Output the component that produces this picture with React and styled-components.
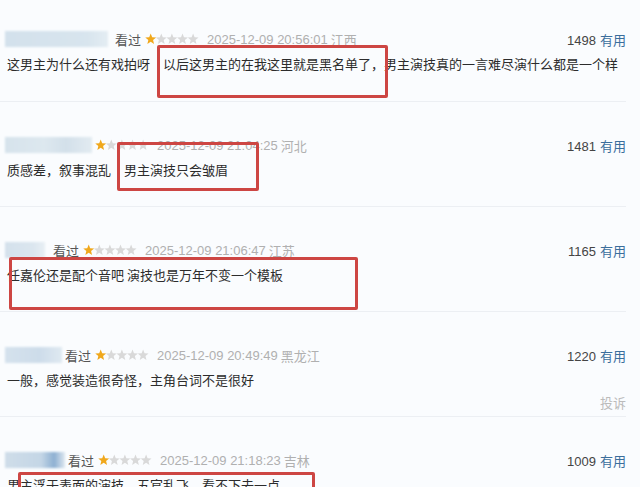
import React from 'react';
import styled, { createGlobalStyle } from 'styled-components';

/* global */

const GlobalStyle = createGlobalStyle`
  html, body {
    margin: 0;
    padding: 0;
    background: #fafcfe;
  }
  body {
    font-family: "Liberation Sans", "Noto Sans CJK SC", sans-serif;
  }
`;

/* styled components start */

const Page = styled.div`
  width: 640px;
  height: 487px;
  overflow: hidden;
  background: #fafcfe;
`;

const List = styled.ul`
  list-style: none;
  margin: 0;
  padding: 0;
  width: 626px;
`;

const Item = styled.li`
  position: relative;
  box-sizing: border-box;
  min-height: 105px;
  padding: 34px 0 0 5px;
  border-bottom: 1px solid #eceff3;

  &:first-child {
    padding-top: 30px;
    min-height: 102px;
  }
`;

const Meta = styled.div`
  display: flex;
  align-items: center;
  height: 18px;
  font-size: 13px;
  white-space: nowrap;
`;

const Blur = styled.span`
  width: ${p => p.w}px;
  height: 16px;
  margin-right: ${p => p.gap}px;
  background: ${p => p.bg};
  filter: blur(1.2px);
  flex: none;
`;

const Watched = styled.span`
  color: #555;
  font-family: "Noto Sans CJK SC", sans-serif;
  margin-right: 4px;
`;

const StarRow = styled.svg`
  flex: none;
`;

const Time = styled.span`
  color: #b0b0b0;
  margin-left: 8px;
`;

const Place = styled.span`
  color: #b0b0b0;
  margin-left: 3px;
  font-family: "Noto Sans CJK SC", sans-serif;
`;

const Votes = styled.span`
  margin-left: auto;
  color: #444;
`;

const Useful = styled.span`
  color: #3b6e9c;
  margin-left: 4px;
  font-family: "Noto Sans CJK SC", sans-serif;
`;

const Text = styled.p`
  margin: 6px 0 0 2px;
  font-family: "Noto Sans CJK SC", sans-serif;
  font-size: 13px;
  line-height: 20px;
  color: #2c2c2c;
  white-space: nowrap;
`;

const Report = styled.div`
  margin-top: 5px;
  text-align: right;
  font-family: "Noto Sans CJK SC", sans-serif;
  font-size: 13px;
  line-height: 16px;
  color: #bbb;
`;

// red annotation box drawn over the comment
const Mark = styled.div`
  position: absolute;
  top: ${p => p.t}px;
  left: ${p => p.l}px;
  width: ${p => p.w}px;
  height: ${p => p.h}px;
  box-sizing: border-box;
  border: 3px solid #cd4643;
  border-radius: 2px;
  pointer-events: none;
`;

/* styled components end */

const starPoints = (cx) => {
  const pts = [];
  for (let i = 0; i < 10; i++) {
    const r = i % 2 === 0 ? 5.7 : 2.5;
    const a = Math.PI / 5 * i - Math.PI / 2;
    pts.push(`${(cx + r * Math.cos(a)).toFixed(2)},${(6.3 + r * Math.sin(a)).toFixed(2)}`);
  }
  return pts.join(' ');
};

const Stars = () => (
  <StarRow width="54" height="12" viewBox="0 0 54 12">
    {[0, 1, 2, 3, 4].map(i => (
      <polygon key={i} points={starPoints(5.7 + i * 10.6)} fill={i === 0 ? '#f0a81c' : '#d9d9d9'} />
    ))}
  </StarRow>
);

const reviews = [
  {
    blur: 103, gap: 7, bg: 'linear-gradient(90deg, #d3e1ec, #d8e5ee 80%, #e4edf3)',
    watched: true, time: '2025-12-09 20:56:01', place: '江西', votes: 1498,
    text: '这男主为什么还有戏拍呀\u3000以后这男主的在我这里就是黑名单了，男主演技真的一言难尽演什么都是一个样',
    mark: { t: 45, l: 157, w: 231, h: 53 },
  },
  {
    blur: 87, gap: 3, bg: 'linear-gradient(90deg, #d6e3ec, #dde8ef 45%, #d3e0ea 70%, #e2ebf1)',
    watched: false, time: '2025-12-09 21:04:25', place: '河北', votes: 1481,
    text: '质感差，叙事混乱\u3000男主演技只会皱眉',
    mark: { t: 40, l: 117, w: 142, h: 49 },
  },
  {
    blur: 40, gap: 8, bg: 'linear-gradient(90deg, #d4e1ec, #dbe6ef 70%, #e8eff4)',
    watched: true, time: '2025-12-09 21:06:47', place: '江苏', votes: 1165,
    text: '任嘉伦还是配个音吧 演技也是万年不变一个模板',
    mark: { t: 50, l: 9, w: 349, h: 53 },
  },
  {
    blur: 57, gap: 3, bg: 'linear-gradient(90deg, #d5e2ed, #cddcea 60%, #dfe9f1)',
    watched: true, time: '2025-12-09 20:49:49', place: '黑龙江', votes: 1220,
    text: '一般，感觉装造很奇怪，主角台词不是很好',
    report: true,
  },
  {
    blur: 60, gap: 3, bg: 'linear-gradient(90deg, #cfdde9, #c4d6e6 60%, #8eb0d2 82%, #dfe8f0)',
    watched: true, time: '2025-12-09 21:18:23', place: '吉林', votes: 1009,
    text: '男主浮于表面的演技，五官乱飞，看不下去一点',
    mark: { t: 55, l: 18, w: 297, h: 60 },
  },
];

const App = () => {
  return (
    <Page>
      <GlobalStyle />
      <List>
        {reviews.map((r, i) => (
          <Item key={i}>
            <Meta>
              <Blur w={r.blur} gap={r.gap} bg={r.bg} />
              {r.watched && <Watched>看过</Watched>}
              <Stars />
              <Time>{r.time}</Time>
              <Place>{r.place}</Place>
              <Votes>
                {r.votes}
                <Useful>有用</Useful>
              </Votes>
            </Meta>
            <Text>{r.text}</Text>
            {r.report && <Report>投诉</Report>}
            {r.mark && <Mark {...r.mark} />}
          </Item>
        ))}
      </List>
    </Page>
  );
};

export default App;
